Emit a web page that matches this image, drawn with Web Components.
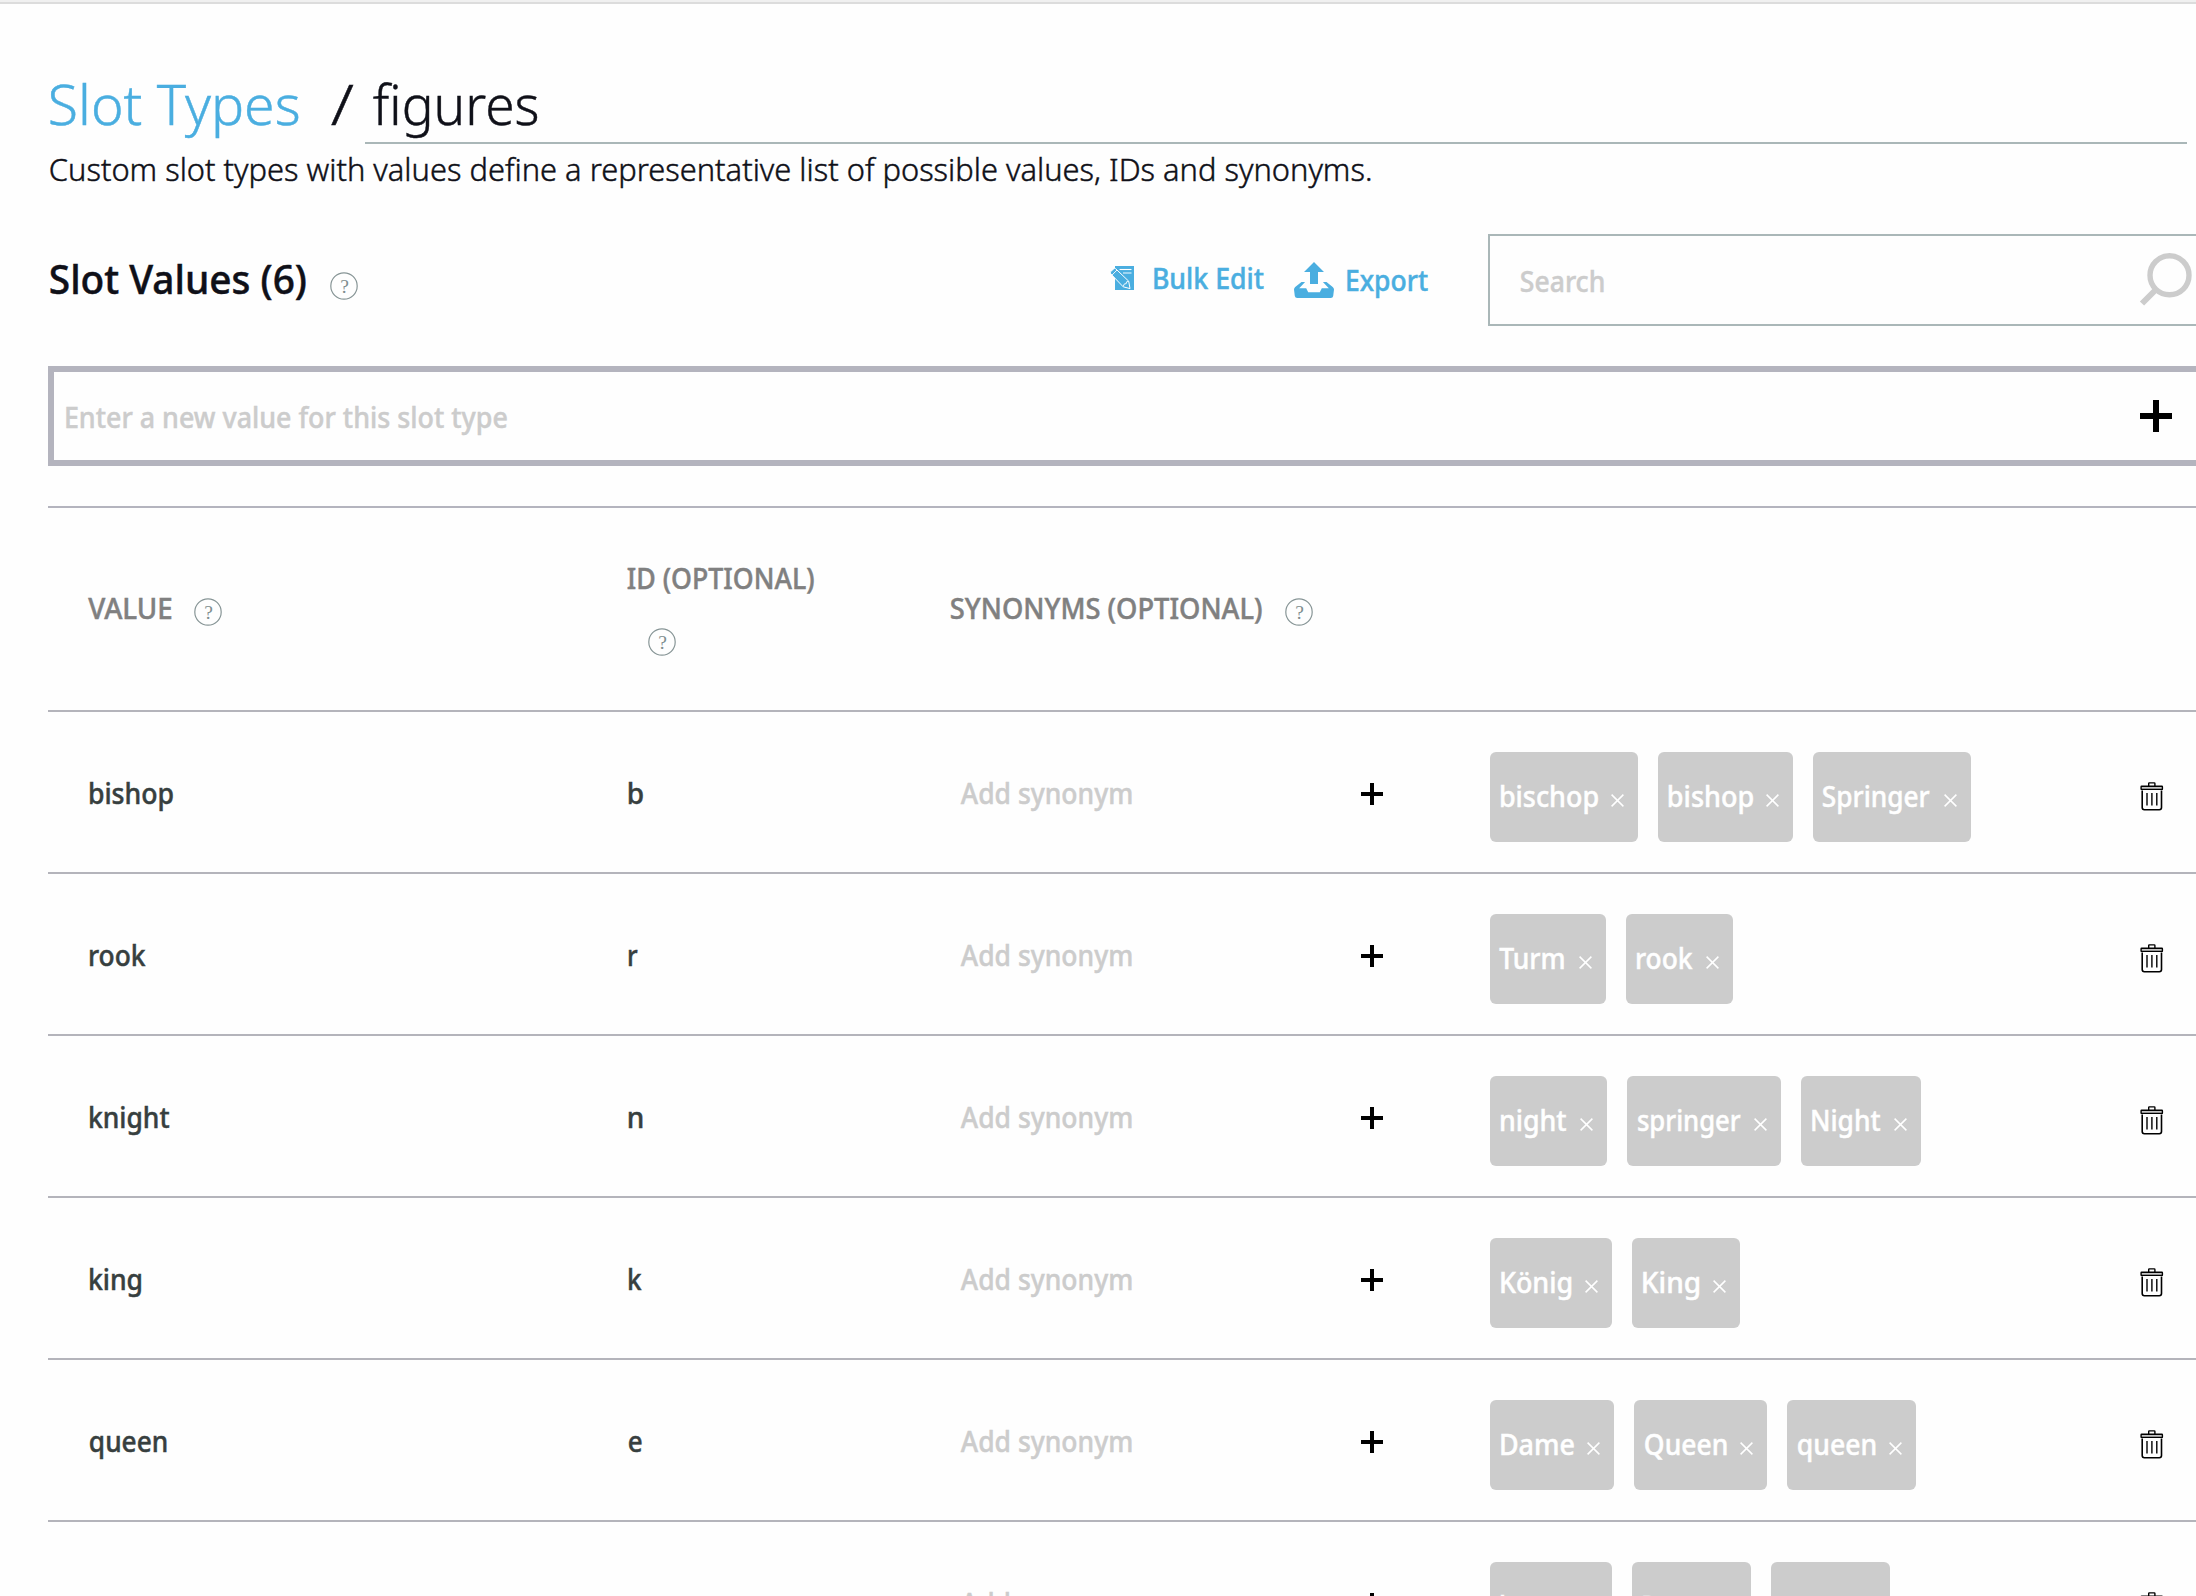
<!DOCTYPE html>
<html lang="en">
<head>
<meta charset="utf-8">
<title>Slot Types</title>
<style>
html, body { margin: 0; height: 1596px; overflow: hidden; background: #fefefe; }
body { font-family: "Noto Sans", "Open Sans", sans-serif; font-size: 28px; font-weight: 500; line-height: 40px; color: #0f1018; }
</style>
</head>
<body>
<slot-page></slot-page>
<script>
const pen = document.createElement('canvas').getContext('2d');

function define(name, html, setup) {
  customElements.define(name, class extends HTMLElement {
    connectedCallback() {
      if (this.shadowRoot) return;
      const root = this.attachShadow({ mode: 'open' });
      root.innerHTML = html;
      if (setup) setup.call(this, root);
    }
  });
}

/* A single line of text whose ink fills the width given in "w". */
define('fit-text', `
<style>
:host { display: block; flex: none; height: 1lh; white-space: nowrap; }
span { display: inline-block; transform-origin: 0 0; -webkit-text-stroke: .45px currentColor; }
</style><span></span>`, function (root) {
  const span = root.querySelector('span');
  const text = this.getAttribute('text');
  const w = +this.getAttribute('w');
  span.textContent = text;
  this.style.width = w + 'px';
  const cs = getComputedStyle(this);
  pen.font = `${cs.fontWeight} ${cs.fontSize} ${cs.fontFamily}`;
  const m = pen.measureText(text);
  const k = w / (m.actualBoundingBoxLeft + m.actualBoundingBoxRight);
  /* optical alignment of the first letter */
  const nudge = /^[TV]/.test(text) ? -.8 : /^[ACIS/]/.test(text) ? -.2 : .8;
  span.style.transform = `translate(${m.actualBoundingBoxLeft * k + nudge}px, .8px) scaleX(${k})`;
});

define('help-icon', `
<style>:host { display: block; flex: none; width: 28px; height: 28px; }
text { font: 400 19.5px "Liberation Serif", serif; fill: #7f8e8f; }</style>
<svg width="28" height="28" viewBox="0 0 28 28" style="display:block"><circle cx="14" cy="14" r="13.2" fill="none" stroke="#879596" stroke-width="1.2"/><text x="14.6" y="21.2" text-anchor="middle">?</text></svg>`);

define('plus-icon', `
<style>:host { display: block; width: 22px; height: 22px; } svg { display: block; width: 100%; height: 100%; }</style>
<svg viewBox="0 0 22 22"><path d="M9 0h4v9h9v4h-9v9H9v-9H0V9h9z" fill="#000"/></svg>`);

define('trash-icon', `
<style>:host { display: block; width: 24px; height: 29px; } svg { display: block; }</style>
<svg width="24" height="29" viewBox="0 0 24 29" fill="none" stroke="#000" stroke-width="1.4">
<path d="M8.7 4V1.5Q8.7.9 9.3.9h5q.6 0 .6.6V4"/>
<rect x="1.1" y="4.2" width="21.3" height="3.2" rx=".5" fill="#c4c4c4"/>
<path d="M2.2 8.4v17.2q0 2.2 2.2 2.2h14.9q2.2 0 2.2-2.2V8.4" stroke-width="1.6"/>
<path d="M7 11v12.5M11.9 11v12.5M16.8 11v12.5"/></svg>`);

define('synonym-chip', `
<style>
:host { display: flex; flex: none; box-sizing: border-box; height: 90px; padding: 23px 14px 0 10px; gap: 14px; background: #ccc; border-radius: 6px; color: #fff; }
svg { display: block; margin-top: 18.5px; }
</style>
<svg width="13" height="13" viewBox="0 0 13 13"><path d="M.6.6l11.8 11.8M12.4.6L.6 12.4" stroke="#fff" stroke-width="1.5"/></svg>`, function (root) {
  const label = document.createElement('fit-text');
  label.setAttribute('text', this.getAttribute('text'));
  label.setAttribute('w', this.getAttribute('w'));
  root.querySelector('svg').before(label);
});

define('slot-row', `
<style>
:host { display: grid; grid-template-columns: 539px 333px 400px 129px 650px auto; align-items: start; box-sizing: border-box; height: 162px; padding-left: 41px; border-top: 2px solid #b4b4bb; }
.v { margin-top: 60px; color: #373f3f; }
.add { margin-top: 60px; color: #ccc; }
plus-icon { margin-top: 71px; }
.chips { display: flex; gap: 20px; margin-top: 40px; }
trash-icon { margin-top: 70px; }
</style>`, function (root) {
  const [value, vw, id, iw] = this.getAttribute('entry').split(',');
  const chips = this.getAttribute('synonyms').split(',').map(s => {
    const [t, w] = s.split(':');
    return `<synonym-chip text="${t}" w="${w}"></synonym-chip>`;
  }).join('');
  root.innerHTML += `
<fit-text class="v" text="${value}" w="${vw}"></fit-text>
<fit-text class="v" text="${id}" w="${iw}"></fit-text>
<fit-text class="add" text="Add synonym" w="171"></fit-text>
<plus-icon></plus-icon>
<div class="chips">${chips}</div>
<trash-icon></trash-icon>`;
});

define('slot-header', `
<style>
:host { display: grid; grid-template-columns: 539px 323px 1fr; box-sizing: border-box; height: 204px; padding-left: 41px; border-top: 2px solid #b4b4be; color: #808080; }
.c { display: flex; margin-top: 79px; }
.c.two { flex-direction: column; margin-top: 49px; }
help-icon { margin: 11px 0 0 22px; }
.c.three help-icon { margin-left: 23px; }
.two help-icon { margin: 31px 0 0 20px; }
</style>
<div class="c"><fit-text text="VALUE" w="83"></fit-text><help-icon></help-icon></div>
<div class="c two"><fit-text text="ID (OPTIONAL)" w="186"></fit-text><help-icon></help-icon></div>
<div class="c three"><fit-text text="SYNONYMS (OPTIONAL)" w="311"></fit-text><help-icon></help-icon></div>`);

define('page-heading', `
<style>
:host { display: block; padding-left: 2px; }
.t { display: flex; height: 90px; font-size: 55px; line-height: 80px; font-weight: 300; }
.t > * { margin-top: 11px; }
.link { color: #4aaee0; }
.slash { margin-left: 32px; }
.name { margin: 0 0 0 11px; box-sizing: border-box; width: 1822px; height: 92px; padding: 11px 0 0 7px; border-bottom: 2px solid #aab7b8; }
.sub { font-size: 31.5px; line-height: 44px; font-weight: 300; margin-top: 3.5px; }
</style>
<div class="t"><fit-text class="link" text="Slot Types" w="249"></fit-text>
<fit-text class="slash" text="/" w="23"></fit-text>
<div class="name"><fit-text text="figures" w="165"></fit-text></div></div>
<fit-text class="sub" text="Custom slot types with values define a representative list of possible values, IDs and synonyms." w="1321"></fit-text>`);

define('slot-toolbar', `
<style>
:host { display: flex; height: 92px; }
h2 { margin: 0 0 0 2px; font-size: 39px; line-height: 56px; font-weight: 500; padding-top: 16px; }
help-icon { margin: 38px 0 0 24px; }
.edit { display: flex; margin-left: 752px; color: #4aaee0; }
.edit svg { display: block; flex: none; }
.s { display: flex; flex: none; box-sizing: border-box; width: 740px; height: 92px; margin-left: 61px; border: 2px solid #aab7b8; padding-left: 31px; color: #ccc; }
.s fit-text { margin-top: 24px; }
.s svg { display: block; margin: 15px 0 0 534px; }
</style>
<h2><fit-text text="Slot Values (6)" w="256"></fit-text></h2>
<help-icon></help-icon>
<div class="edit">
<svg style="margin-top:32px" width="24" height="24" viewBox="0 0 24 24"><path d="M5 0h19v24H5z" fill="#4aaee0"/><path d="M9.500 3.500h12" stroke="#fff" stroke-width="1.100"/><path d="M13 7h8.500" stroke="#a9d9f2" stroke-width="1.800"/><path d="M.5 5.800L4.200 2.400Q5 2 5.600 2.700L18.700 15.200 20 22.600 13.200 20.800.9 8Q-.1 7 .5 5.800z" fill="#4aaee0" stroke="#fff" stroke-width="1"/><path d="M2 9.100L7 4M13.200 20.300l1.200-2.400 1.800-.2.3-1.800 2-.6" fill="none" stroke="#fff" stroke-width=".9"/></svg>
<fit-text style="margin:23px 0 0 18.500px" text="Bulk Edit" w="110.500"></fit-text>
<svg style="margin:28px 0 0 31px" width="40" height="36" viewBox="0 0 40 36"><path d="M20 0l10 10h-6v12h-8V10h-6zM7.500 20h3.600L5.200 26.200h7l2 4h11.600l2-4h7L28.900 20h3.600l6.200 5q1.300 1 1.300 2.500l-.8 6.500q-.3 2-2.400 2H3.200q-2 0-2.400-2L0 27.500Q0 26 1.200 25z" fill="#4aaee0"/></svg>
<fit-text style="margin:25px 0 0 11.500px" text="Export" w="81.500"></fit-text>
</div>
<div class="s"><fit-text text="Search" w="83"></fit-text>
<svg width="54" height="56" viewBox="0 0 54 56" fill="none" stroke="#ccc"><circle cx="31.500" cy="24.300" r="19.500" stroke-width="5.400"/><path d="M18.500 38L4 52.500" stroke-width="6"/></svg></div>`);

define('slot-entry', `
<style>
:host { display: flex; box-sizing: border-box; width: 2200px; height: 100px; border: 6px solid #b4b4be; padding-left: 11px; color: #ccc; }
fit-text { margin-top: 24px; }
svg { display: block; flex: none; margin: 28px 0 0 1634px; }
</style>
<fit-text text="Enter a new value for this slot type" w="441"></fit-text>
<svg width="32" height="32" viewBox="0 0 32 32"><path d="M13 0h6v13h13v6H19v13h-6V19H0v-6h13z" fill="#000"/></svg>`);

define('slot-page', `
<style>
:host { display: block; box-sizing: border-box; width: 2196px; height: 1596px; overflow: hidden; background: #fefefe; }
.strip { height: 2px; background: #f0f0f0; border-bottom: 2px solid #dcdcdc; }
main { padding: 48px 0 0 48px; }
slot-toolbar { margin-top: 44.5px; }
slot-entry { margin-top: 40px; }
slot-header { margin-top: 40px; }
</style>
<div class="strip"></div>
<main>
<page-heading></page-heading>
<slot-toolbar></slot-toolbar>
<slot-entry></slot-entry>
<slot-header></slot-header>
<slot-row entry="bishop,83,b,14" synonyms="bischop:97,bishop:84,Springer:107"></slot-row>
<slot-row entry="rook,56,r,9" synonyms="Turm:65,rook:56"></slot-row>
<slot-row entry="knight,80,n,14" synonyms="night:66,springer:103,Night:69"></slot-row>
<slot-row entry="king,52,k,13" synonyms="König:71,King:57"></slot-row>
<slot-row entry="queen,77,e,13" synonyms="Dame:73,Queen:82,queen:78"></slot-row>
<slot-row entry="pawn,66,p,14" synonyms="bauer:71,Bauer:68,pawn:68"></slot-row>
</main>`);
</script>
</body>
</html>
